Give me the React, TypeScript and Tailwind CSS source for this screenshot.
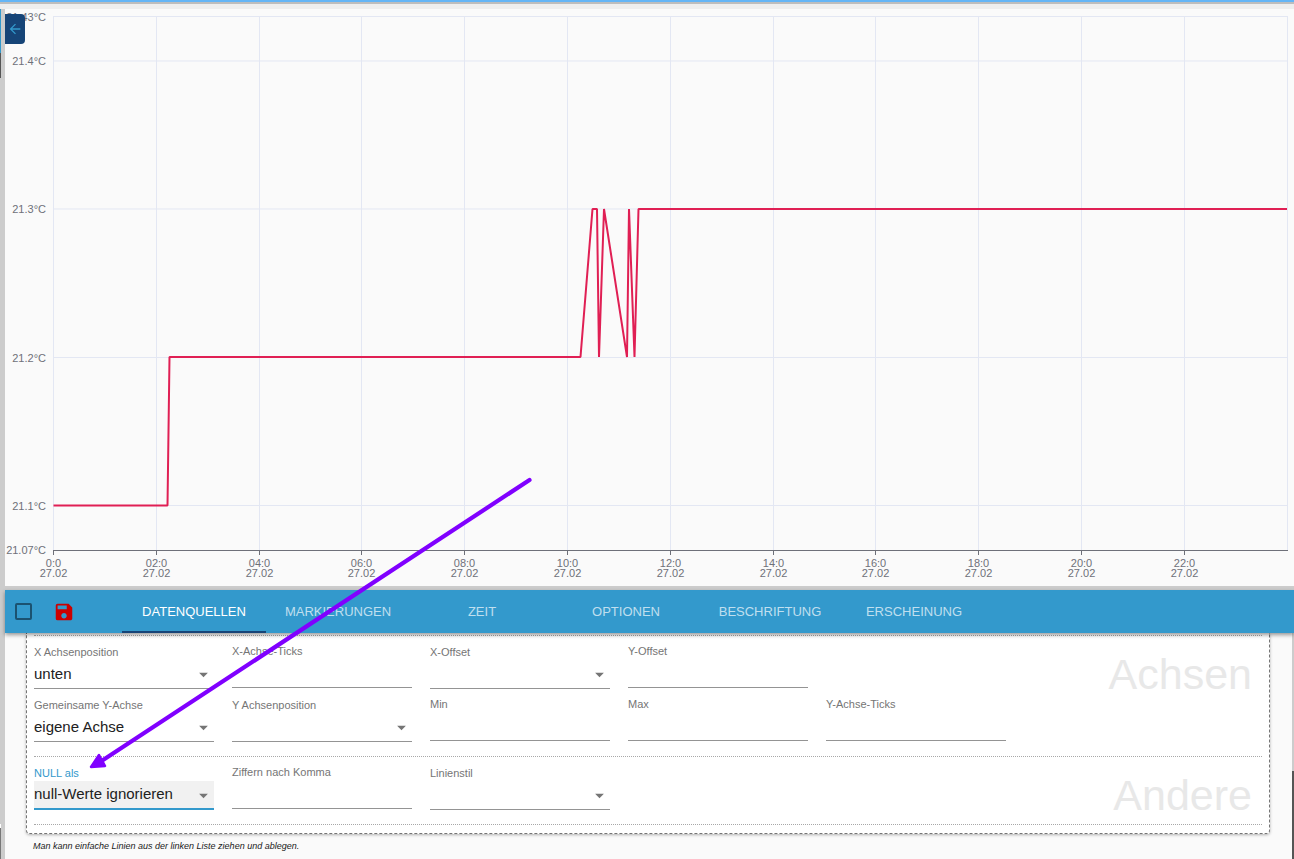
import { useId } from "react";
import { MdArrowBack, MdArrowDropDown, MdSave } from "react-icons/md";

const timeTicks = [
  { x: 53.5, label: "0:0" },
  { x: 156.5, label: "02:0" },
  { x: 259.5, label: "04:0" },
  { x: 361.5, label: "06:0" },
  { x: 464.5, label: "08:0" },
  { x: 567.5, label: "10:0" },
  { x: 670.5, label: "12:0" },
  { x: 773.5, label: "14:0" },
  { x: 875.5, label: "16:0" },
  { x: 978.5, label: "18:0" },
  { x: 1081.5, label: "20:0" },
  { x: 1184.5, label: "22:0" },
];

const valueTicks = [
  { y: 16.5, label: "21.43°C" },
  { y: 61, label: "21.4°C" },
  { y: 209, label: "21.3°C" },
  { y: 357.5, label: "21.2°C" },
  { y: 505.5, label: "21.1°C" },
  { y: 550, label: "21.07°C" },
];

const tabs = ["DATENQUELLEN", "MARKIERUNGEN", "ZEIT", "OPTIONEN", "BESCHRIFTUNG", "ERSCHEINUNG"];

function Chart() {
  return (
    <svg viewBox="5 9 1289 577" className="block h-auto w-full" role="img" aria-label="Temperatur">
      <g stroke="#e3e7f3" strokeWidth="1">
        {valueTicks.slice(0, 5).map((t) => (
          <line key={t.label} x1="53" x2="1288" y1={t.y} y2={t.y} />
        ))}
        {timeTicks.map((t) => (
          <line key={t.label} x1={t.x} x2={t.x} y1="16" y2="550" />
        ))}
        <line x1="1287.5" x2="1287.5" y1="16" y2="550" />
      </g>
      <g stroke="#6e7079" strokeWidth="1">
        <line x1="53" x2="1288" y1="550.5" y2="550.5" />
        {timeTicks.map((t) => (
          <line key={t.label} x1={t.x} x2={t.x} y1="550" y2="555" />
        ))}
      </g>
      <g fill="#6e7079" fontSize="11" fontFamily="'Liberation Sans', Arial, sans-serif">
        {valueTicks.map((t) => (
          <text key={t.label} x="46" y={t.y + 4} textAnchor="end">
            {t.label}
          </text>
        ))}
        {timeTicks.map((t) => (
          <text key={t.label} textAnchor="middle">
            <tspan x={t.x} y="567">{t.label}</tspan>
            <tspan x={t.x} y="577">27.02</tspan>
          </text>
        ))}
      </g>
      <polyline
        points="53.5,505.5 167.5,505.5 169.5,357 580.5,357 592.5,209 597,209 599,357 604,209 627,357 629,209 634.5,357 638.5,209 1287,209"
        fill="none"
        stroke="#e01f54"
        strokeWidth="2"
        strokeLinejoin="bevel"
      />
    </svg>
  );
}

function SelectField({ label, value = "", active = false }: { label: string; value?: string; active?: boolean }) {
  const id = useId();
  return (
    <div className="flex w-45 flex-col">
      <label htmlFor={id} className={`h-4 text-[11px] leading-4 ${active ? "text-[#3399cc]" : "text-[#757575]"}`}>
        {label}
      </label>
      <div className="relative h-[29px]">
        <select
          id={id}
          defaultValue={value}
          className={`block h-full w-full appearance-none pr-6 text-[15px] text-[#212121] outline-none ${
            active ? "border-b-2 border-[#3399cc] bg-[#f1f1f1]" : "border-b border-[#949494] bg-transparent"
          }`}
        >
          <option value={value}>{value}</option>
        </select>
        <MdArrowDropDown className="pointer-events-none absolute top-1 right-0 size-[21px] text-[#757575]" />
      </div>
    </div>
  );
}

function TextField({ label }: { label: string }) {
  const id = useId();
  return (
    <div className="flex w-45 flex-col">
      <label htmlFor={id} className="h-[15px] text-[11px] leading-[15px] text-[#757575]">
        {label}
      </label>
      <input
        id={id}
        type="text"
        className="h-[29px] w-full border-b border-[#949494] bg-transparent text-[15px] text-[#212121] outline-none"
      />
    </div>
  );
}

export default function App() {
  return (
    <div className="relative flex min-h-screen flex-col overflow-hidden bg-[#fafafa] font-['Liberation_Sans',Arial,sans-serif]">
      <header>
        <div className="h-[2px] bg-[#64b5f6]" />
        <div className="h-[2px] bg-[#bdbdbd]" />
        <div className="h-[5px] bg-[#eeeeee]" />
      </header>
      <div className="flex grow">
        <div className="flex w-[5px] shrink-0 flex-col bg-[#cccccc]">
          <div className="h-11 w-px bg-[#3399cc]" />
          <div className="h-[25px] w-px bg-[#555555]" />
          <div className="grow" />
          <div className="h-1 w-px bg-white" />
          <div className="h-[31px] w-px bg-[#777777]" />
        </div>
        <main className="flex min-w-0 grow flex-col">
          <section className="relative">
            <Chart />
            <button
              type="button"
              aria-label="Zurück"
              className="absolute top-[5px] left-0 flex h-[30px] w-5 items-center justify-center rounded-r bg-[#164477] text-[#3399cc]"
            >
              <MdArrowBack className="size-4" />
            </button>
          </section>
          <div className="h-1 bg-[#cccccc]" />
          <nav className="relative z-10 flex h-[43px] items-center bg-[#3399cc] shadow-[0_2px_4px_rgba(0,0,0,0.4)]">
            <input
              type="checkbox"
              aria-label="Alle auswählen"
              className="ml-[10px] size-[17px] appearance-none rounded-[2px] border-2 border-[#1b5270]"
            />
            <button type="button" aria-label="Speichern" className="ml-[21px] flex text-[#cc0000]">
              <MdSave className="size-[22px]" />
            </button>
            <div role="tablist" className="ml-[47px] flex self-stretch">
              {tabs.map((tab, i) => (
                <button
                  key={tab}
                  type="button"
                  role="tab"
                  aria-selected={i === 0}
                  className={`w-36 border-b-2 pt-[2px] text-[13px] ${
                    i === 0 ? "border-[#164477] text-white" : "border-transparent text-white/70"
                  }`}
                >
                  {tab}
                </button>
              ))}
            </div>
          </nav>
          <div className="flex grow">
            <div className="min-w-0 grow pr-[22px] pl-[21px]">
              <div className="rounded-b border border-t-0 border-dashed border-[#757575] bg-white px-[7px] pt-[2px] pb-2 shadow-[0_1px_3px_rgba(0,0,0,0.3)]">
                <section className="flex justify-between border-t border-dotted border-[#a8a8a8] pt-2">
                  <div className="flex flex-col gap-2 pb-[14px]">
                    <div className="flex items-start gap-[18px]">
                      <SelectField label="X Achsenposition" value="unten" />
                      <TextField label="X-Achse-Ticks" />
                      <SelectField label="X-Offset" />
                      <TextField label="Y-Offset" />
                    </div>
                    <div className="flex items-start gap-[18px]">
                      <SelectField label="Gemeinsame Y-Achse" value="eigene Achse" />
                      <SelectField label="Y Achsenposition" />
                      <TextField label="Min" />
                      <TextField label="Max" />
                      <TextField label="Y-Achse-Ticks" />
                    </div>
                  </div>
                  <h2 className="pt-[6px] pr-[10px] text-[43px] leading-[48px] text-[#e8e8e8]">Achsen</h2>
                </section>
                <section className="flex justify-between border-y border-dotted border-[#a8a8a8] pt-2">
                  <div className="flex items-start gap-[18px] pb-[14px]">
                    <SelectField label="NULL als" value="null-Werte ignorieren" active />
                    <TextField label="Ziffern nach Komma" />
                    <SelectField label="Linienstil" />
                  </div>
                  <h2 className="pt-[6px] pr-[10px] text-[43px] leading-[48px] text-[#e8e8e8]">Andere</h2>
                </section>
              </div>
              <p className="pt-1 pl-[7px] text-[9px] leading-4 text-[#212121] italic">
                Man kann einfache Linien aus der linken Liste ziehen und ablegen.
              </p>
            </div>
            <div className="flex w-[2px] flex-col">
              <div className="h-[138px] bg-[#cccccc]" />
              <div className="grow bg-[#555555]" />
            </div>
          </div>
        </main>
      </div>
      <svg
        viewBox="88 476 446 296"
        className="pointer-events-none absolute top-[476px] left-[88px] z-20 h-[296px] w-[446px]"
        aria-hidden="true"
      >
        <path d="M529.500 480 L100 762" stroke="#8000ff" strokeWidth="4.200" strokeLinecap="round" />
        <path d="M91 767 L99 755 L105 766 Z" fill="#8000ff" stroke="#8000ff" strokeWidth="2.500" strokeLinejoin="round" />
      </svg>
    </div>
  );
}
